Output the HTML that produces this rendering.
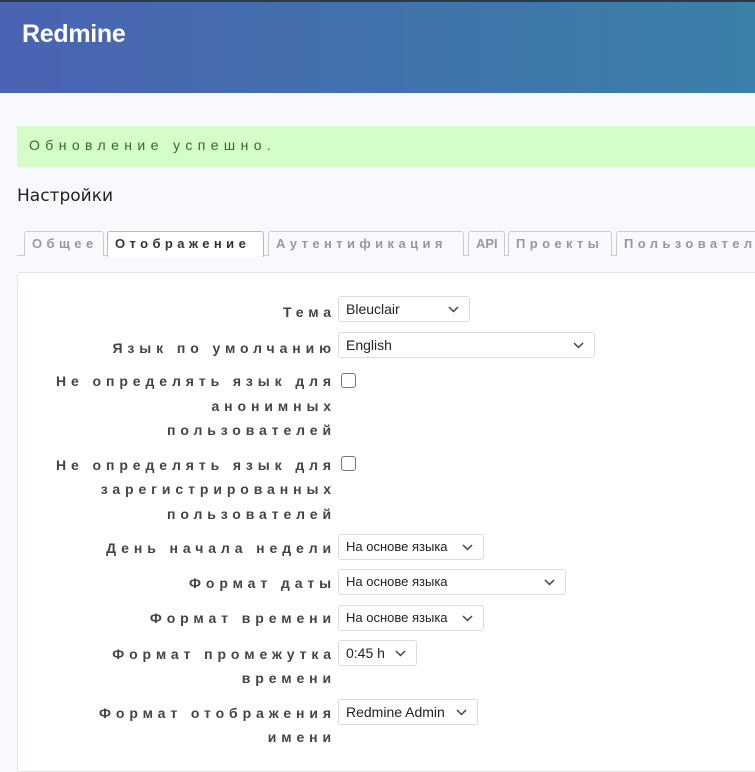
<!DOCTYPE html>
<html><head><meta charset="utf-8"><style>
*{margin:0;padding:0;box-sizing:border-box}
body{width:755px;height:759px;overflow:hidden;background:#f8f9fc;font-family:"Liberation Sans","DejaVu Sans",sans-serif;position:relative}
#hdr{position:absolute;left:0;top:0;width:755px;height:93px;background:linear-gradient(90deg,#4a63b2,#3a80a8);border-top:2px solid #2b3a4a}
#hdr h1{position:absolute;left:22px;top:18px;color:#fff;font-size:25px;font-weight:bold;font-family:"Liberation Sans",sans-serif;letter-spacing:-0.3px}
#flash{position:absolute;left:17px;top:126px;width:738px;height:41px;background:#d4fdc8;color:#2e6b2a;font-size:14px;letter-spacing:5.4px;padding:11px 0 0 12px}
#title{position:absolute;left:17px;top:186px;font-size:17px;color:#222;font-family:"DejaVu Sans",sans-serif}
.tab{position:absolute;top:231px;height:25px;border:1px solid #ccc;border-bottom:none;border-radius:3px 3px 0 0;background:#f8f9fc;color:#999;font-weight:bold;font-size:13px;letter-spacing:4.4px;padding:4px 0 0 7px;white-space:nowrap;overflow:hidden}
.tab.act{background:#fff;color:#333;height:26px;border-color:#bbb}
#tline{position:absolute;left:17px;top:255px;width:738px;height:1px;background:#ccc}
#box{position:absolute;left:17px;top:272px;width:745px;height:500px;background:#fff;border:1px solid #e3e6ea;border-radius:3px}
.lb{position:absolute;right:419px;font-weight:bold;font-size:14px;letter-spacing:4.9px;color:#444;text-align:right;white-space:nowrap;line-height:16px}
.sel{position:absolute;left:338px;height:26px;border:1px solid #ddd;border-radius:3px;background:#fff;font-size:14px;color:#222;padding:4px 0 0 7px}
.sel svg{position:absolute;right:10px;top:9px}
.cb{position:absolute;left:341px;width:15px;height:15px;border:1px solid #777;border-radius:3px;background:#fff}
</style></head><body>
<div id="hdr"><h1>Redmine</h1></div>
<div id="flash">Обновление успешно.</div>
<div id="title">Настройки</div>
<div id="tline"></div>
<div class="tab" style="left:24px;width:80px">Общее</div>
<div class="tab act" style="left:107px;width:157px">Отображение</div>
<div class="tab" style="left:268px;width:196px">Аутентификация</div>
<div class="tab" style="left:468px;width:37px;letter-spacing:0">API</div>
<div class="tab" style="left:508px;width:104px">Проекты</div>
<div class="tab" style="left:616px;width:150px">Пользователи</div>
<div id="box"></div>

<div class="lb" style="top:304px">Тема</div>
<div class="lb" style="top:340px">Язык по умолчанию</div>
<div class="lb" style="top:373px">Не определять язык для</div>
<div class="lb" style="top:398px">анонимных</div>
<div class="lb" style="top:422px">пользователей</div>
<div class="lb" style="top:457px">Не определять язык для</div>
<div class="lb" style="top:481px">зарегистрированных</div>
<div class="lb" style="top:506px">пользователей</div>
<div class="lb" style="top:540px">День начала недели</div>
<div class="lb" style="top:575px">Формат даты</div>
<div class="lb" style="top:610px">Формат времени</div>
<div class="lb" style="top:646px">Формат промежутка</div>
<div class="lb" style="top:670px">времени</div>
<div class="lb" style="top:705px">Формат отображения</div>
<div class="lb" style="top:729px">имени</div>

<div class="sel" style="top:296px;width:132px">Bleuclair<svg width="11" height="7"><path d="M1 1l4.5 4.5L10 1" stroke="#444" stroke-width="1.5" fill="none"/></svg></div>
<div class="sel" style="top:332px;width:257px">English<svg width="11" height="7"><path d="M1 1l4.5 4.5L10 1" stroke="#444" stroke-width="1.5" fill="none"/></svg></div>
<div class="cb" style="top:373px"></div>
<div class="cb" style="top:456px"></div>
<div class="sel" style="top:534px;width:146px;font-size:13px">На основе языка<svg width="11" height="7"><path d="M1 1l4.5 4.5L10 1" stroke="#444" stroke-width="1.5" fill="none"/></svg></div>
<div class="sel" style="top:569px;width:228px;font-size:13px">На основе языка<svg width="11" height="7"><path d="M1 1l4.5 4.5L10 1" stroke="#444" stroke-width="1.5" fill="none"/></svg></div>
<div class="sel" style="top:605px;width:146px;font-size:13px">На основе языка<svg width="11" height="7"><path d="M1 1l4.5 4.5L10 1" stroke="#444" stroke-width="1.5" fill="none"/></svg></div>
<div class="sel" style="top:640px;width:79px">0:45 h<svg width="11" height="7"><path d="M1 1l4.5 4.5L10 1" stroke="#444" stroke-width="1.5" fill="none"/></svg></div>
<div class="sel" style="top:699px;width:140px">Redmine Admin<svg width="11" height="7"><path d="M1 1l4.5 4.5L10 1" stroke="#444" stroke-width="1.5" fill="none"/></svg></div>
</body></html>
